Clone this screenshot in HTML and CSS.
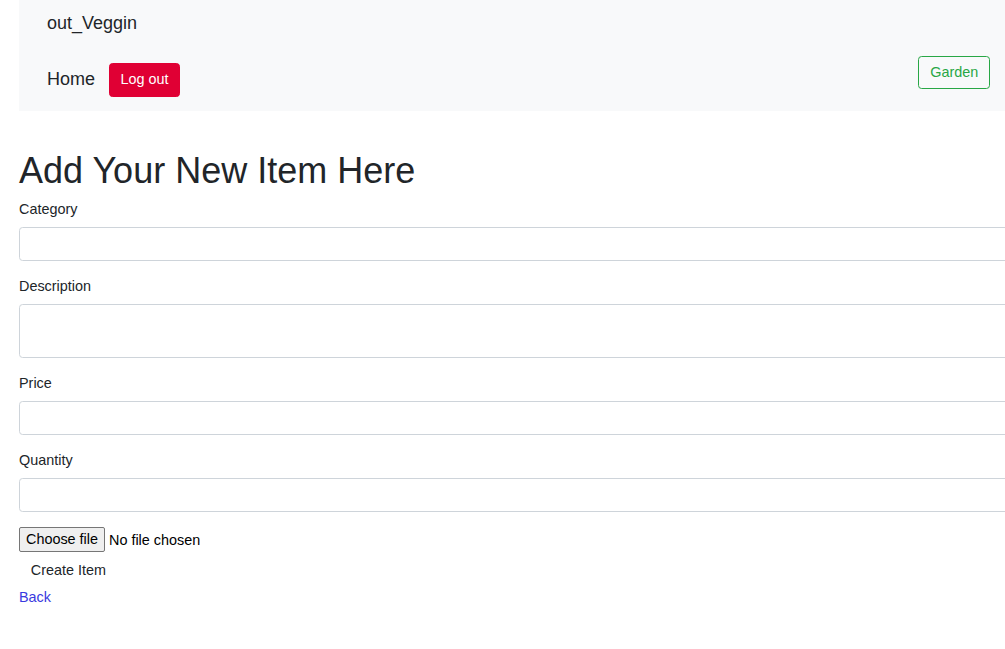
FILE: index.html
```html
<!DOCTYPE html>
<html>
<head>
<meta charset="utf-8">
<title>Add Item</title>
<link rel="stylesheet" href="styles.css">
</head>
<body>
<div class="page">
  <nav class="navbar">
    <div class="brand-row"><a class="brand" href="#">out_Veggin</a></div>
    <div class="nav-row">
      <div class="nav-left">
        <a class="nav-link" href="#">Home</a>
        <button class="btn btn-danger" type="button">Log out</button>
      </div>
      <button class="btn btn-outline-success" type="button">Garden</button>
    </div>
  </nav>
  <main class="content">
    <h1 class="title">Add Your New Item Here</h1>
    <form class="form">
      <div class="form-group">
        <label class="label">Category</label>
        <input class="form-control" type="text">
      </div>
      <div class="form-group">
        <label class="label">Description</label>
        <textarea class="form-control textarea"></textarea>
      </div>
      <div class="form-group">
        <label class="label">Price</label>
        <input class="form-control" type="text">
      </div>
      <div class="form-group">
        <label class="label">Quantity</label>
        <input class="form-control" type="text">
      </div>
      <label class="file-field">
        <input class="file-hidden" type="file">
        <span class="file-btn">Choose file</span>
        <span class="file-name">No file chosen</span>
      </label>
      <button class="btn btn-plain" type="button">Create Item</button>
    </form>
    <a class="back" href="#">Back</a>
  </main>
</div>
</body>
</html>
```
FILE: styles.css
```css
html {
  overflow: hidden;
}
body {
  margin: 0;
  font-family: "Liberation Sans", Arial, sans-serif;
  font-size: 14.4px;
  line-height: 1.5;
  color: #212529;
  background: #fff;
}
.page {
  margin-left: 19px;
  width: 1005px;
}
.navbar {
  background: #f8f9fa;
  padding: 5px 34px 14px 28px;
  height: 111px;
  box-sizing: border-box;
}
.brand-row {
  height: 36px;
  display: flex;
  align-items: center;
}
.brand {
  font-size: 18px;
  line-height: 27px;
  color: #212529;
  text-decoration: none;
}
.nav-row {
  margin-top: 15px;
  display: flex;
  justify-content: space-between;
  align-items: flex-start;
}
.nav-left {
  display: flex;
  align-items: center;
  gap: 14px;
  margin-top: 7px;
}
.nav-link {
  font-size: 18px;
  line-height: 32px;
  padding-bottom: 2px;
  color: #212529;
  text-decoration: none;
}
.btn {
  font-family: inherit;
  font-size: 14.4px;
  line-height: 21.6px;
  padding: 5.4px 10.8px;
  border: 1px solid transparent;
  border-radius: 3.6px;
  background: transparent;
  color: #212529;
  cursor: pointer;
}
.btn-danger {
  background: #e00034;
  border-color: #e00034;
  color: #fff;
  padding: 5.4px 10.5px;
}
.btn-outline-success {
  color: #28a745;
  border-color: #28a745;
  padding: 4.6px 10.8px;
  background: transparent;
}
.content {
  padding-top: 37.6px;
}
.title {
  margin: 0 0 7.2px;
  font-size: 36px;
  font-weight: 400;
  line-height: 43.2px;
}
.form-group {
  margin-bottom: 15px;
}
.label {
  display: block;
  margin-bottom: 6.2px;
}
.form-control {
  display: block;
  width: 100%;
  box-sizing: border-box;
  height: 34.2px;
  padding: 5.4px 10.8px;
  font-family: inherit;
  font-size: 14.4px;
  border: 1px solid #ced4da;
  border-radius: 3.6px;
  background: #fff;
  color: #495057;
}
.textarea {
  height: 54.2px;
  resize: none;
}
.file-field {
  display: flex;
  align-items: center;
  gap: 4px;
  margin-top: 1.5px;
  height: 26px;
  cursor: pointer;
}
.file-hidden {
  display: none;
}
.file-btn {
  box-sizing: border-box;
  height: 25px;
  line-height: 22px;
  padding: 0 6px;
  background: #efefef;
  border: 1px solid #767676;
  border-radius: 2px;
  color: #000;
}
.file-name {
  color: #000;
  line-height: 25px;
  padding-top: 1px;
}
.btn-plain {
  display: block;
  padding-top: 5.8px;
  padding-bottom: 4.2px;
}
.back {
  display: block;
  color: #3a3ae0;
  text-decoration: none;
}
```
